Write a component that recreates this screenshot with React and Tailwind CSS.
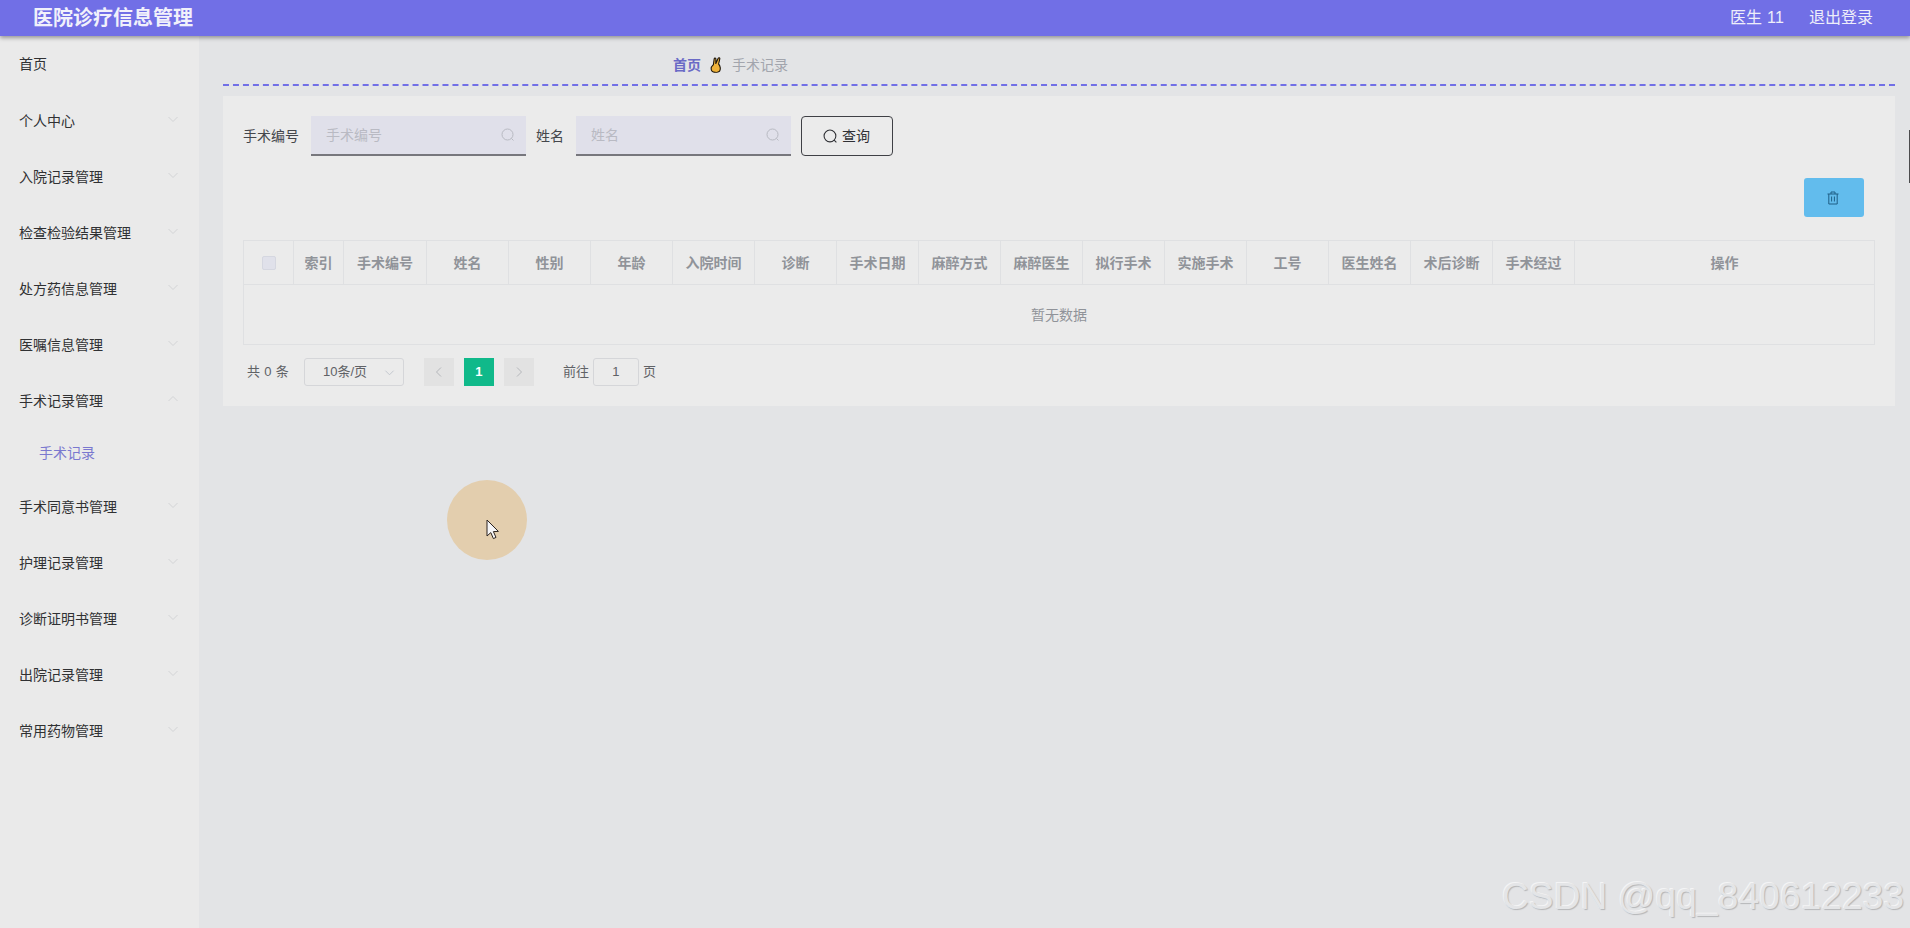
import React from 'react';

const menu = [
  { name: '首页', plain: true },
  { name: '个人中心' },
  { name: '入院记录管理' },
  { name: '检查检验结果管理' },
  { name: '处方药信息管理' },
  { name: '医嘱信息管理' },
  { name: '手术记录管理', open: true, sub: ['手术记录'] },
  { name: '手术同意书管理' },
  { name: '护理记录管理' },
  { name: '诊断证明书管理' },
  { name: '出院记录管理' },
  { name: '常用药物管理' },
];

const columns = ['索引', '手术编号', '姓名', '性别', '年龄', '入院时间', '诊断', '手术日期', '麻醉方式', '麻醉医生', '拟行手术', '实施手术', '工号', '医生姓名', '术后诊断', '手术经过', '操作'];

function Chevron({ up, className }) {
  return (
    <svg className={className} viewBox="0 0 12 12" fill="none" stroke="currentColor" strokeWidth="1">
      <path d={up ? 'M1.5 8 L6 3.5 L10.5 8' : 'M1.5 4 L6 8.5 L10.5 4'} />
    </svg>
  );
}

function SearchIcon({ className }) {
  return (
    <svg className={className} viewBox="0 0 14 14" fill="none" stroke="currentColor" strokeWidth="1">
      <circle cx="6.5" cy="6.5" r="5.5" />
      <path d="M10.4 10.4 L12.5 12.5" />
    </svg>
  );
}

function SearchField({ placeholder }) {
  return (
    <div className="flex items-center justify-between w-[215px] h-10 pl-[15px] pr-[11px] bg-[#e0e0ea] border-b-2 border-[#77777d]">
      <span className="text-sm text-[#b9bac3]">{placeholder}</span>
      <SearchIcon className="w-[14px] h-[14px] text-[#b8bac2]" />
    </div>
  );
}

function Sidebar() {
  return (
    <aside className="w-[199px] shrink-0 bg-[#eaeaea]">
      {menu.map((item, i) => (
        <div key={item.name}>
          <div className={`relative flex items-center pl-[19px] text-sm text-[#303133] ${i === 0 ? 'h-[57px] pb-[2px]' : 'h-[56px]'}`}>
            {item.name}
            {!item.plain && (
              <Chevron up={item.open} className="absolute right-[20px] top-[20px] w-[12px] h-[12px] text-[#d3d4d6]" />
            )}
          </div>
          {item.sub && item.sub.map((s) => (
            <div key={s} className="flex items-center h-[50px] pb-[2px] pl-[39px] text-sm text-[#7a78cf]">{s}</div>
          ))}
        </div>
      ))}
    </aside>
  );
}

function DataTable() {
  return (
    <div className="mt-[23px] border border-[#dfe0e2] text-sm">
      <div className="grid grid-cols-[50px_50px_83px_repeat(14,minmax(0,1fr))_299px] h-[44px] border-b border-[#dfe0e2]">
        <div className="flex items-center justify-center border-r border-[#dfe0e2]">
          <span className="w-[14px] h-[14px] rounded-[2px] bg-[#e0e1ea] border border-[#d5d7e0]" />
        </div>
        {columns.map((c, i) => (
          <div key={c} className={`flex items-center justify-center font-bold text-[#909399] ${i < columns.length - 1 ? 'border-r border-[#dfe0e2]' : ''}`}>{c}</div>
        ))}
      </div>
      <div className="flex items-center justify-center h-[59px] text-[#909399]">暂无数据</div>
    </div>
  );
}

function Pagination() {
  return (
    <div className="flex items-center h-7 mt-[13px] text-[13px] text-[#606266]">
      <span className="ml-1 tracking-[0.3px]">共 0 条</span>
      <div className="flex items-center justify-between w-[100px] h-7 ml-[15px] pl-[18px] pr-[8px] border border-[#d5d6d9] rounded-[3px]">
        <span>10条/页</span>
        <Chevron className="w-[11px] h-[11px] text-[#c0c4cc]" />
      </div>
      <div className="flex items-center justify-center w-[30px] h-7 ml-5 bg-[#e2e2e2] text-[#b4b6ba]">
        <Chevron className="w-3 h-3 rotate-90" />
      </div>
      <div className="flex items-center justify-center w-[30px] h-7 ml-[10px] bg-[#10b98a] font-bold text-white">1</div>
      <div className="flex items-center justify-center w-[30px] h-7 ml-[10px] bg-[#e2e2e2] text-[#b4b6ba]">
        <Chevron className="w-3 h-3 -rotate-90" />
      </div>
      <span className="ml-[29px]">前往</span>
      <div className="flex items-center justify-center w-[46px] h-7 ml-[4px] border border-[#d5d6d9] rounded-[3px]">1</div>
      <span className="ml-[4px]">页</span>
    </div>
  );
}

export default function App() {
  return (
    <div className="relative w-[1910px] h-[928px] overflow-hidden flex flex-col bg-[#e3e4e6] font-['Liberation_Sans','Noto_Sans_CJK_SC',sans-serif]">
      <header className="relative z-10 flex items-center justify-between h-[36px] shrink-0 pl-[33px] pr-[37px] bg-[#716fe6] shadow-[0_2px_4px_rgba(0,0,0,0.35)]">
        <span className="text-xl font-bold text-[#f1f1fb]">医院诊疗信息管理</span>
        <div className="flex items-center gap-[25px] text-base text-[#eeeefa]">
          <span className="tracking-[0.2px]">医生 11</span>
          <span>退出登录</span>
        </div>
      </header>

      <div className="flex flex-1 min-h-0">
        <Sidebar />
        <main className="flex-1 pl-[24px] pr-[15px]">
          <div className="flex items-center h-[50px] pt-[9px] pl-[450px] border-b-2 border-dashed border-[#716fe6] text-sm">
            <span className="font-bold text-[#6a6ac6]">首页</span>
            <svg className="w-[12px] h-[16px] ml-[9px] mr-[10px]" viewBox="0 0 12 16">
              <path d="M3.4 15 C1.4 14.5 0.8 12 1.4 10 L3.4 7.6 L4.2 1.8 C4.4 0.7 5.9 0.8 5.9 2 L5.8 6.4 L8.2 1.2 C8.8 0.3 10 0.7 9.8 1.8 L8.6 7 C10.4 8.8 10.8 12.4 9.6 14.2 C8.6 15.4 5.2 15.5 3.4 15 Z" fill="#eeb23a" stroke="#1c1408" strokeWidth="1.1" strokeLinejoin="round" />
            </svg>
            <span className="text-[#a2a5ad]">手术记录</span>
          </div>

          <section className="mt-[10px] h-[310px] p-5 bg-[#ebebeb]">
            <div className="flex items-center text-sm text-[#45474c]">
              <span className="w-[68px]">手术编号</span>
              <SearchField placeholder="手术编号" />
              <span className="w-[50px] pl-[10px]">姓名</span>
              <SearchField placeholder="姓名" />
              <button className="flex items-center justify-center gap-[4px] w-[92px] h-10 ml-[10px] pr-px border border-[#3f4045] rounded-[4px] text-[#2f3034]">
                <SearchIcon className="w-[15px] h-[15px]" />
                查询
              </button>
            </div>

            <div className="flex justify-end mt-[22px] pr-[11px]">
              <button className="flex items-center justify-center w-[60px] h-[39px] bg-[#62bced] rounded-[3px] pr-[3px] text-[#1f5f86]">
                <svg className="w-[14px] h-[14px]" viewBox="0 0 14 14" fill="none" stroke="currentColor" strokeWidth="1">
                  <path d="M1.5 3 H12.5 M5 3 V1 H9 V3 M2.8 3 V13 H11.2 V3 M5.6 5.5 V10.5 M8.4 5.5 V10.5" />
                </svg>
              </button>
            </div>

            <DataTable />
            <Pagination />
          </section>
        </main>
      </div>

      {/* overlays from the screen recording */}
      <div className="absolute right-0 top-[130px] w-px h-[53px] bg-[#4b4b4d]" />
      <div className="absolute left-[447px] top-[480px] w-[80px] h-[80px] rounded-full bg-[#e3ceae]" />
      <svg className="absolute left-[486px] top-[519px] w-[14px] h-[22px]" viewBox="0 0 14 22">
        <path d="M1 1 V17 L4.8 13.6 L7.4 19.6 L10 18.4 L7.4 12.6 L12.4 12.4 Z" fill="#f5f5f7" stroke="#2a2320" strokeWidth="1" strokeLinejoin="round" />
      </svg>
      <span className="absolute left-[1502px] top-[876px] text-[37px] tracking-[0.15px] leading-[42px] whitespace-nowrap text-[#e4e5e7] [text-shadow:1px_1px_1px_#b5b6b8,-1px_-1px_0_#f4f4f5]">CSDN @qq_840612233</span>
    </div>
  );
}
